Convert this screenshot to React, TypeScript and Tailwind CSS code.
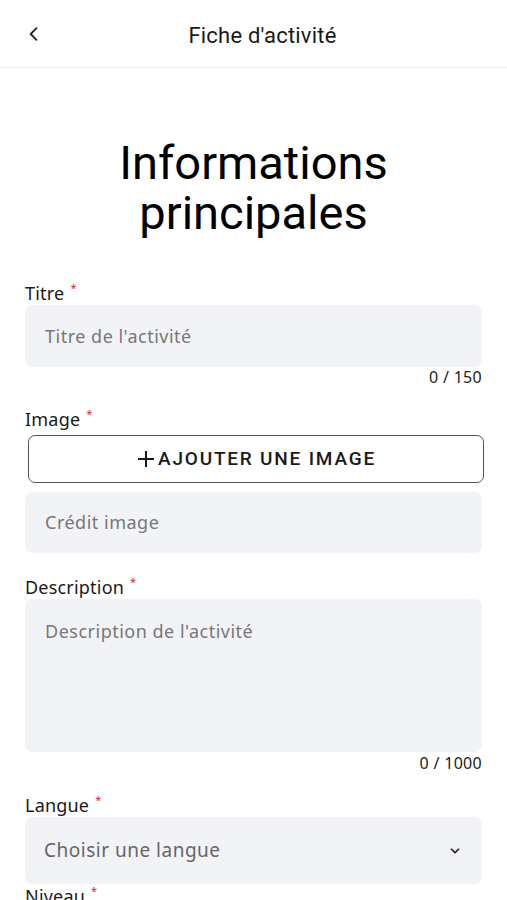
import React from "react";

const maven = { fontFamily: '"Noto Sans", "Open Sans", sans-serif' };
const roboto = { fontFamily: 'Roboto, "Noto Sans", sans-serif' };

function Label({ text }: { text: string }) {
  return (
    <div className="flex items-start text-[18px] leading-[20px] text-[#1a1a1a] tracking-[0.2px]" style={maven}>
      <span>{text}</span>
      <span className="ml-[6px] text-[11px] leading-[10px] text-[#e0232b]">*</span>
    </div>
  );
}

export default function App() {
  return (
    <div className="w-[507px] min-h-[900px] bg-white overflow-hidden">
      <header className="h-[68px] border-b border-[#eeeeee] flex items-center relative" style={roboto}>
        <div className="absolute left-[24px] top-[24px]">
          <svg width="20" height="20" viewBox="0 0 24 24" fill="none" stroke="#222" strokeWidth="2.2" strokeLinecap="round" strokeLinejoin="round">
            <path d="M15 5l-7 7 7 7" />
          </svg>
        </div>
        <div className="flex-1 text-center text-[22px] font-normal tracking-[0.2px] text-[#1a1a1a] pt-[4px] pl-[18px]">Fiche d'activité</div>
      </header>

      <h1 className="text-center text-[47px] leading-[50px] text-black mt-[70px]" style={roboto}>
        Informations
        <br />
        principales
      </h1>

      <div className="px-[25px] mt-[45px] flex flex-col">
        <Label text="Titre" />
        <div className="mt-[2px] h-[62px] rounded-[7px] bg-[#f2f3f6] flex items-center px-[20px] text-[18px] tracking-[0.5px] text-[#777777]" style={maven}>
          Titre de l'activité
        </div>
        <div className="text-right text-[16px] leading-[20px] mt-[0px] text-[#222] tracking-[0.3px]" style={maven}>0 / 150</div>

        <div className="mt-[22px]"><Label text="Image" /></div>
        <button className="mt-[6px] ml-[3px] mr-[-2px] h-[48px] rounded-[7px] border-[1.5px] border-[#555555] flex items-center justify-center text-[19px] font-medium tracking-[1.8px] text-[#1a1a1a]" style={roboto}>
          <svg width="20" height="20" viewBox="0 0 20 20" className="mr-[2px]" stroke="#1a1a1a" strokeWidth="2">
            <path d="M10 2v16M2 10h16" />
          </svg>
          AJOUTER UNE IMAGE
        </button>
        <div className="mt-[9px] h-[61px] rounded-[7px] bg-[#f2f3f6] flex items-center px-[20px] text-[18px] tracking-[0.5px] text-[#777777]" style={maven}>
          Crédit image
        </div>

        <div className="mt-[24px]"><Label text="Description" /></div>
        <div className="mt-[2px] h-[153px] rounded-[7px] bg-[#f2f3f6] px-[20px] pt-[19px] text-[18px] tracking-[0.5px] text-[#777777]" style={maven}>
          Description de l'activité
        </div>
        <div className="text-right text-[16px] leading-[20px] mt-[1px] text-[#222] tracking-[0.3px]" style={maven}>0 / 1000</div>

        <div className="mt-[22px]"><Label text="Langue" /></div>
        <div className="mt-[2px] h-[67px] rounded-[7px] bg-[#f2f3f6] flex items-center pl-[19px] pr-[20px] text-[19px] tracking-[0.5px] text-[#666666]" style={maven}>
          <span className="flex-1">Choisir une langue</span>
          <svg width="14" height="14" viewBox="0 0 24 24" fill="none" stroke="#222" strokeWidth="3" strokeLinecap="round" strokeLinejoin="round">
            <path d="M6 9l6 6 6-6" />
          </svg>
        </div>

        <div className="mt-[2px]"><Label text="Niveau" /></div>
      </div>
    </div>
  );
}
